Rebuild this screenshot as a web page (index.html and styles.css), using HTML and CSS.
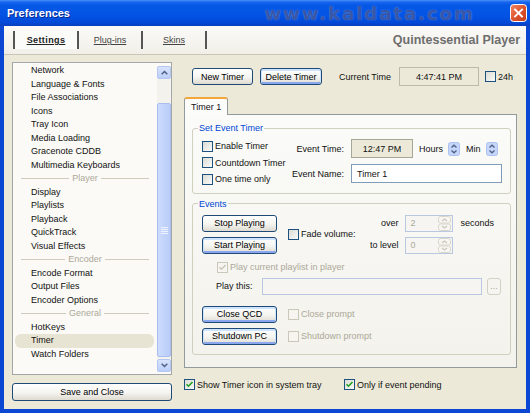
FILE: index.html
```html
<!DOCTYPE html>
<html>
<head>
    <meta charset="utf-8">
    <title>Preferences</title>
    <link rel="stylesheet" href="styles.css">
</head>
<body>
<div class="window">
    <div class="titlebar">
        <span class="title">Preferences</span>
        <span class="watermark">www.kaldata.com</span>
        <span class="close">
            <svg width="17" height="18" viewBox="0 0 17 18">
                <defs>
                    <linearGradient id="red" x1="0" y1="0" x2="1" y2="1">
                        <stop offset="0" stop-color="#f08a66"/>
                        <stop offset="0.5" stop-color="#e0552f"/>
                        <stop offset="1" stop-color="#c23a14"/>
                    </linearGradient>
                </defs>
                <rect x="0.5" y="0.5" width="16" height="17" rx="3" fill="url(#red)" stroke="#fff"/>
                <path d="M5 5.5l7 7M12 5.5l-7 7" stroke="#fff" stroke-width="1.9" stroke-linecap="square"/>
            </svg>
        </span>
    </div>

    <div class="client">
        <div class="header">
            <nav class="tabs">
                <a class="tab active">Settings</a>
                <a class="tab">Plug-ins</a>
                <a class="tab">Skins</a>
            </nav>
            <div class="brand">Quintessential Player</div>
        </div>

        <div class="main">
            <aside class="side">
                <div class="listbox">
                    <ul class="items">
                        <li>Network</li>
                        <li>Language &amp; Fonts</li>
                        <li>File Associations</li>
                        <li>Icons</li>
                        <li>Tray Icon</li>
                        <li>Media Loading</li>
                        <li>Gracenote CDDB</li>
                        <li>Multimedia Keyboards</li>
                        <li class="sep">Player</li>
                        <li>Display</li>
                        <li>Playlists</li>
                        <li>Playback</li>
                        <li>QuickTrack</li>
                        <li>Visual Effects</li>
                        <li class="sep">Encoder</li>
                        <li>Encode Format</li>
                        <li>Output Files</li>
                        <li>Encoder Options</li>
                        <li class="sep">General</li>
                        <li>HotKeys</li>
                        <li class="sel">Timer</li>
                        <li>Watch Folders</li>
                    </ul>
                    <div class="scrollbar">
                        <span class="sb-btn">
                            <svg width="7" height="5" viewBox="0 0 7 5"><path d="M0.7 4.3L3.5 1.5 6.3 4.3" fill="none" stroke="#4d6185" stroke-width="1.5"/></svg>
                        </span>
                        <span class="track">
                            <span class="thumb">
                                <svg width="7" height="7" viewBox="0 0 7 7"><path d="M0 0.5h7M0 2.5h7M0 4.5h7M0 6.5h7" stroke="#eef3ff" stroke-width="1"/></svg>
                            </span>
                        </span>
                        <span class="sb-btn">
                            <svg width="7" height="5" viewBox="0 0 7 5"><path d="M0.7 0.7L3.5 3.5 6.3 0.7" fill="none" stroke="#4d6185" stroke-width="1.5"/></svg>
                        </span>
                    </div>
                </div>
                <button class="btn save">Save and Close</button>
            </aside>

            <section class="content">
                <div class="toolbar">
                    <button class="btn b-new">New Timer</button>
                    <button class="btn b-del hot">Delete Timer</button>
                    <span class="cur-label">Current Time</span>
                    <span class="readout clock">4:47:41 PM</span>
                    <label class="chk h24"><span class="box"></span>24h</label>
                </div>

                <div class="tabstrip">
                    <span class="ptab">Timer 1</span>
                </div>
                <div class="panel">
                    <fieldset class="group">
                        <legend>Set Event Timer</legend>
                        <div class="g-timer">
                            <div class="checks">
                                <label class="chk"><span class="box"></span>Enable Timer</label>
                                <label class="chk"><span class="box"></span>Countdown Timer</label>
                                <label class="chk"><span class="box"></span>One time only</label>
                            </div>
                            <div class="fields">
                                <span class="flabel">Event Time:</span>
                                <div class="timeline">
                                    <span class="readout evtime">12:47 PM</span>
                                    <span class="unit">Hours</span>
                                    <svg class="spin" width="12" height="14" viewBox="0 0 12 14"><rect x="0.5" y="0.5" width="11" height="13" rx="2" fill="#c6d6fb" stroke="#aec2ef"/><path d="M3.5 5.5l2.5-2.3 2.5 2.3M3.5 8.5l2.5 2.3 2.5-2.3" fill="none" stroke="#4d6185" stroke-width="1.3"/></svg>
                                    <span class="unit">Min</span>
                                    <svg class="spin" width="12" height="14" viewBox="0 0 12 14"><rect x="0.5" y="0.5" width="11" height="13" rx="2" fill="#c6d6fb" stroke="#aec2ef"/><path d="M3.5 5.5l2.5-2.3 2.5 2.3M3.5 8.5l2.5 2.3 2.5-2.3" fill="none" stroke="#4d6185" stroke-width="1.3"/></svg>
                                </div>
                                <span class="flabel">Event Name:</span>
                                <span class="input name">Timer 1</span>
                            </div>
                        </div>
                    </fieldset>

                    <fieldset class="group events">
                        <legend>Events</legend>
                        <div class="ev-row">
                            <div class="btncol">
                                <button class="btn b-ev">Stop Playing</button>
                                <button class="btn b-ev hot">Start Playing</button>
                            </div>
                            <label class="chk fade"><span class="box"></span>Fade volume:</label>
                            <div class="spins">
                                <span class="slabel">over</span>
                                <span class="spinbox"><span class="val">2</span>
                                    <svg width="13" height="15" viewBox="0 0 13 15"><rect x="0.5" y="0.5" width="12" height="6.5" rx="2" fill="#f7f6f2" stroke="#d9d7cb"/><rect x="0.5" y="8" width="12" height="6.5" rx="2" fill="#f7f6f2" stroke="#d9d7cb"/><path d="M4 5l2.5-2 2.5 2M4 10l2.5 2 2.5-2" fill="none" stroke="#c9c7ba" stroke-width="1.2"/></svg>
                                </span>
                                <span class="unit">seconds</span>
                                <span class="slabel">to level</span>
                                <span class="spinbox"><span class="val">0</span>
                                    <svg width="13" height="15" viewBox="0 0 13 15"><rect x="0.5" y="0.5" width="12" height="6.5" rx="2" fill="#f7f6f2" stroke="#d9d7cb"/><rect x="0.5" y="8" width="12" height="6.5" rx="2" fill="#f7f6f2" stroke="#d9d7cb"/><path d="M4 5l2.5-2 2.5 2M4 10l2.5 2 2.5-2" fill="none" stroke="#c9c7ba" stroke-width="1.2"/></svg>
                                </span>
                                <span></span>
                            </div>
                        </div>
                        <label class="chk off playlist"><span class="box"><svg width="9" height="9" viewBox="0 0 9 9"><path d="M1.5 4.2l2 2 4-4.2" fill="none" stroke="#c9c7ba" stroke-width="1.6"/></svg></span>Play current playlist in player</label>
                        <div class="play-row">
                            <span class="plabel">Play this:</span>
                            <span class="input path"></span>
                            <span class="browse">...</span>
                        </div>
                        <div class="act-row first">
                            <button class="btn b-ev hot">Close QCD</button>
                            <label class="chk off"><span class="box"></span>Close prompt</label>
                        </div>
                        <div class="act-row">
                            <button class="btn b-ev hot">Shutdown PC</button>
                            <label class="chk off"><span class="box"></span>Shutdown prompt</label>
                        </div>
                    </fieldset>
                </div>

                <div class="opts">
                    <label class="chk tray"><span class="box"><svg width="9" height="9" viewBox="0 0 9 9"><path d="M1.5 4.2l2 2 4-4.2" fill="none" stroke="#21a121" stroke-width="1.6"/></svg></span>Show Timer icon in system tray</label>
                    <label class="chk"><span class="box"><svg width="9" height="9" viewBox="0 0 9 9"><path d="M1.5 4.2l2 2 4-4.2" fill="none" stroke="#21a121" stroke-width="1.6"/></svg></span>Only if event pending</label>
                </div>
            </section>
        </div>
    </div>
</div>
</body>
</html>
```

FILE: styles.css
```css
body {
    margin: 0;
    font-family: "Liberation Sans", Arial, sans-serif;
    font-size: 9px;
    color: #111;
}
.window {
    width: 530px;
    height: 413px;
    display: flex;
    flex-direction: column;
    background: #0b47d2;
}

/* title bar */
.titlebar {
    height: 26px;
    flex: none;
    display: flex;
    align-items: center;
    padding: 0 3px 0 7px;
    background: linear-gradient(#4a92f7 0, #1a66ef 2px, #0558e6 5px, #0353e4 60%, #0348d6 88%, #0a3fbe 100%);
}
.title {
    color: #fff;
    font-weight: bold;
    font-size: 11px;
    text-shadow: 1px 1px 0 #0a2a8e;
}
.watermark {
    margin-left: auto;
    margin-right: 35px;
    font-family: "DejaVu Sans", sans-serif;
    font-weight: bold;
    font-size: 18px;
    letter-spacing: 2px;
    color: rgba(6, 28, 110, 0.62);
    text-shadow: 0 0 1px rgba(150, 190, 255, 0.9);
}
.close {
    display: flex;
}

/* client area */
.client {
    flex: 1;
    margin: 0 4px 4px;
    background: #ece9d8;
    display: flex;
    flex-direction: column;
}
.header {
    height: 28px;
    flex: none;
    display: flex;
    align-items: center;
    justify-content: space-between;
    padding: 0 6px 0 9px;
    background: linear-gradient(#fbfaf7, #f1efe8);
    border-bottom: 1px solid #c9c6b8;
}
.tabs {
    display: flex;
    height: 18px;
    border-right: 2px solid #555;
}
.tab {
    width: 62px;
    display: flex;
    align-items: center;
    justify-content: center;
    border-left: 2px solid #555;
    color: #444;
    text-decoration: underline;
}
.tab.active {
    color: #222;
    font-weight: bold;
    letter-spacing: 0.4px;
    background: #fbfbf9;
}
.brand {
    color: #6e6e6e;
    font-weight: bold;
    font-size: 12.5px;
}

.main {
    flex: 1;
    display: flex;
    gap: 12px;
    padding: 7px 7px 0 8px;
}

/* left list */
.side {
    width: 160px;
    display: flex;
    flex-direction: column;
}
.listbox {
    height: 313px;
    box-sizing: border-box;
    border: 1px solid #a3a7ab;
    background: #fbfaf6;
    display: flex;
}
.items {
    flex: 1;
    list-style: none;
    margin: 0;
    padding: 1px 0 0;
}
.items li {
    height: 13.5px;
    line-height: 13.5px;
    padding-left: 18px;
    white-space: nowrap;
}
.items li.sel {
    background: #e8e4d3;
    border-radius: 6px;
    margin: 0 3px 0 2px;
    padding-left: 16px;
}
.items li.sep {
    display: flex;
    align-items: center;
    gap: 3px;
    margin: 0 8px;
    padding: 0;
    color: #aca899;
}
.items li.sep::before,
.items li.sep::after {
    content: "";
    flex: 1;
    border-top: 1px solid #cfccbd;
}
.scrollbar {
    width: 14px;
    margin: 3px 0 2px;
    display: flex;
    flex-direction: column;
    background: #f3f2ec;
}
.sb-btn {
    height: 13px;
    box-sizing: border-box;
    border: 1px solid #b4c7f2;
    border-radius: 2px;
    background: linear-gradient(#d8e3fd, #bccff8);
    display: flex;
    align-items: center;
    justify-content: center;
}
.track {
    flex: 1;
    display: flex;
    flex-direction: column;
    padding: 24px 0 2px;
}
.thumb {
    flex: 1;
    border: 1px solid #a9bdf0;
    border-radius: 2px;
    background: linear-gradient(90deg, #cddbfd, #b9cdf8);
    display: flex;
    align-items: center;
    justify-content: center;
}

/* buttons */
.btn {
    height: 17px;
    box-sizing: border-box;
    padding: 0;
    border: 1px solid #1f4a78;
    border-radius: 3px;
    background: linear-gradient(#ffffff, #f4f4f0 55%, #dedad0);
    font: inherit;
    color: #000;
    text-align: center;
}
.btn.hot {
    box-shadow: inset 0 1px 0 1px #cfe4ff, inset 0 -1px 0 1px #8aa6ec;
}
.save {
    width: 160px;
    height: 18px;
    margin-top: 8px;
}
.b-new { width: 61px; }
.b-del { width: 62px; margin-left: 7px; }
.b-ev { width: 75px; }

/* right side */
.content {
    flex: 1;
    display: flex;
    flex-direction: column;
}
.toolbar {
    display: flex;
    align-items: center;
    margin: 5px 0 0 8px;
}
.cur-label {
    margin-left: 17px;
}
.readout {
    box-sizing: border-box;
    height: 19px;
    border: 1px solid #bdbaab;
    background: #ece9d8;
    display: flex;
    align-items: center;
    justify-content: center;
}
.clock {
    width: 80px;
    margin-left: 8px;
}
.h24 {
    margin-left: 6px;
}

.chk {
    display: flex;
    align-items: center;
    gap: 2px;
    height: 11px;
    white-space: nowrap;
}
.box {
    width: 11px;
    height: 11px;
    flex: none;
    box-sizing: border-box;
    border: 1px solid #1c5180;
    background: linear-gradient(135deg, #dcdcd5, #fafaf8);
    display: flex;
    align-items: center;
    justify-content: center;
}
.chk.off {
    color: #aca899;
}
.chk.off .box {
    border-color: #cac8bb;
    background: #f6f5f0;
}

.tabstrip {
    display: flex;
    margin-top: 11px;
}
.ptab {
    position: relative;
    height: 18px;
    margin-bottom: -1px;
    box-sizing: border-box;
    padding: 0 6px;
    border: 1px solid #919b9c;
    border-top: 2px solid #f3a63a;
    border-bottom: none;
    border-radius: 3px 3px 0 0;
    background: #fcfcfb;
    display: flex;
    align-items: center;
}
.panel {
    height: 254px;
    margin-right: 7px;
    box-sizing: border-box;
    padding-top: 8px;
    border: 1px solid #919b9c;
    background: linear-gradient(#fbfbf9, #f3f2ec);
}

.group {
    margin: 0 5px 0 7px;
    padding: 0 8px 8px 9px;
    border: 1px solid #d0d0bf;
    border-radius: 3px;
    min-width: 0;
}
.group legend {
    color: #0046d5;
    padding: 0 1px;
    margin-left: -4px;
}
.g-timer {
    display: flex;
    align-items: flex-start;
    padding-top: 6px;
}
.checks {
    width: 90px;
    display: flex;
    flex-direction: column;
    gap: 5.5px;
    margin-top: 1.5px;
}
.fields {
    display: grid;
    grid-template-columns: auto auto;
    column-gap: 7px;
    row-gap: 6px;
    align-items: center;
}
.flabel {
    text-align: right;
    white-space: nowrap;
}
.timeline {
    display: flex;
    align-items: center;
}
.evtime {
    width: 62px;
    border-color: #a8a698;
}
.timeline .unit {
    margin: 0 5px 0 6px;
}
.input {
    box-sizing: border-box;
    border: 1px solid #7f9db9;
    background: #fff;
    display: flex;
    align-items: center;
}
.name {
    width: 151px;
    height: 19px;
    padding-left: 5px;
}

.events {
    margin-top: 5px;
    padding-bottom: 9px;
}
.ev-row {
    display: flex;
    align-items: center;
    padding-top: 6px;
}
.btncol {
    display: flex;
    flex-direction: column;
    gap: 5px;
}
.fade {
    margin-left: 11px;
}
.spins {
    display: grid;
    grid-template-columns: 33px 48px auto;
    column-gap: 6px;
    row-gap: 5px;
    align-items: center;
    margin-left: 10px;
}
.slabel {
    text-align: right;
    white-space: nowrap;
}
.spins .unit {
    margin-left: 2px;
}
.spinbox {
    height: 17px;
    box-sizing: border-box;
    border: 1px solid #b9c7e0;
    background: #f6f5f1;
    color: #aca899;
    display: flex;
    align-items: center;
    padding: 0 1px 0 5px;
}
.spinbox .val {
    flex: 1;
}
.playlist {
    margin: 8px 0 0 15px;
}
.play-row {
    display: flex;
    align-items: center;
    margin: 5px 0 0 14px;
}
.plabel {
    width: 46px;
}
.path {
    width: 220px;
    height: 17px;
    border-color: #b9c7e0;
    background: #f6f5f1;
}
.browse {
    width: 14px;
    height: 17px;
    margin-left: 5px;
    box-sizing: border-box;
    border: 1px solid #d3d1c4;
    border-radius: 3px;
    color: #aca899;
    display: flex;
    align-items: center;
    justify-content: center;
}
.act-row {
    display: flex;
    align-items: center;
    gap: 11px;
    margin-top: 5px;
}
.act-row.first {
    margin-top: 11px;
}

.opts {
    display: flex;
    margin-top: 11px;
}
.tray {
    width: 160px;
}
```
